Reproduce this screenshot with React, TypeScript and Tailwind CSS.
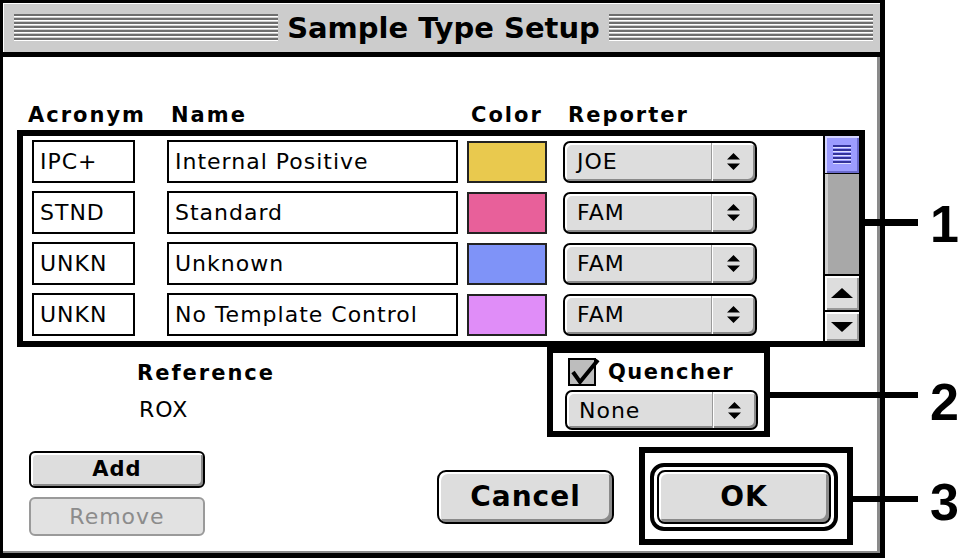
import React from "react";

function UpDown() {
  return (
    <svg width="13" height="17" viewBox="0 0 13 17">
      <path d="M0 6.5 L6.5 0 L13 6.5 Z M0 10.5 L13 10.5 L6.5 17 Z" fill="#000" />
    </svg>
  );
}

function Popup({ label, className }: { label: string; className: string }) {
  return (
    <div
      className={`flex items-stretch rounded-[7px] border-2 border-black bg-[#dddddd] shadow-[inset_2px_2px_0_#ffffff,inset_-2px_-2px_0_#8a8a8a] ${className}`}
    >
      <div className="flex flex-1 items-center pl-[12px] text-[22px] tracking-[1px]">{label}</div>
      <div className="flex w-[44px] items-center justify-center border-l border-[#9a9a9a] shadow-[inset_1px_0_0_#ffffff]">
        <UpDown />
      </div>
    </div>
  );
}

const rows = [
  { a: "IPC+", n: "Internal Positive", c: "bg-[#e9c94e]", r: "JOE" },
  { a: "STND", n: "Standard", c: "bg-[#e8609a]", r: "FAM" },
  { a: "UNKN", n: "Unknown", c: "bg-[#7f93f8]", r: "FAM" },
  { a: "UNKN", n: "No Template Control", c: "bg-[#e08df8]", r: "FAM" },
];

const stripes =
  "bg-[image:repeating-linear-gradient(to_bottom,#6e6e6e_0px,#6e6e6e_2px,#ffffff_2px,#ffffff_3px,#cccccc_3px,#cccccc_4px)]";

export default function App() {
  return (
    <div className="relative h-[560px] w-[960px] overflow-hidden bg-white font-['DejaVu_Sans',sans-serif] text-black">
      {/* Window */}
      <div className="flex h-[558px] w-[885px] flex-col border-b-[5px] border-l-[3px] border-r-[5px] border-t-[3px] border-black bg-white shadow-[inset_-3px_-2px_0_#8a8a8a]">
        {/* Title bar */}
        <div className="flex h-[54px] shrink-0 items-center gap-[9px] border-b-[5px] border-black bg-[#cccccc] pl-[11px] pr-[7px] shadow-[inset_1px_1px_0_#ffffff]">
          <div className={`h-[28px] flex-1 ${stripes}`} />
          <div className="text-[29px] font-bold leading-[34px]">Sample Type Setup</div>
          <div className={`h-[28px] flex-1 ${stripes}`} />
        </div>

        {/* Content */}
        <div className="flex flex-1 flex-col">
          {/* Header */}
          <div className="mt-[46px] flex pl-[25px] text-[21px] font-bold leading-[24px] tracking-[2px]">
            <div className="w-[143px]">Acronym</div>
            <div className="w-[300px]">Name</div>
            <div className="w-[97px]">Color</div>
            <div>Reporter</div>
          </div>

          {/* Table box */}
          <div className="ml-[14px] mt-[3px] flex h-[217px] w-[848px] border-[6px] border-black">
            <div className="flex flex-1 flex-col gap-[8px] pb-[5px] pl-[9px] pt-[4px]">
              {rows.map((row, i) => (
                <div key={i} className="flex h-[43px] items-center">
                  <div className="flex h-[43px] w-[103px] items-center border-2 border-black pl-[6px] text-[22px] tracking-[1px]">
                    {row.a}
                  </div>
                  <div className="ml-[32px] flex h-[43px] w-[291px] items-center border-2 border-black pl-[6px] text-[22px] tracking-[1px]">
                    {row.n}
                  </div>
                  <div className={`ml-[9px] h-[42px] w-[80px] border-2 border-[#222222] ${row.c}`} />
                  <Popup label={row.r} className="ml-[16px] h-[42px] w-[194px]" />
                </div>
              ))}
            </div>
            {/* Scrollbar */}
            <div className="flex w-[36px] flex-col border-l-2 border-black">
              <div className="flex h-[38px] items-center justify-center border-b border-black bg-[#9c9cff] shadow-[inset_2px_2px_0_#d4d4ff,inset_-2px_-2px_0_#6a6acc]">
                <div className="h-[20px] w-[18px] bg-[image:repeating-linear-gradient(to_bottom,#33339a_0px,#33339a_2px,#e0e0ff_2px,#e0e0ff_3px,#9c9cff_3px,#9c9cff_4px)]" />
              </div>
              <div className="flex-1 bg-[#a8a8a8] shadow-[inset_3px_0_0_#cfcfcf]" />
              <div className="flex h-[36px] items-center justify-center border-t-2 border-black bg-[#dddddd] shadow-[inset_2px_2px_0_#ffffff,inset_-2px_-2px_0_#999999]">
                <svg width="22" height="10" viewBox="0 0 22 10">
                  <path d="M0 10 L11 0 L22 10 Z" fill="#000" />
                </svg>
              </div>
              <div className="flex h-[31px] items-center justify-center border-t-2 border-black bg-[#dddddd] shadow-[inset_2px_2px_0_#ffffff,inset_-2px_-2px_0_#999999]">
                <svg width="22" height="10" viewBox="0 0 22 10">
                  <path d="M0 0 L22 0 L11 10 Z" fill="#000" />
                </svg>
              </div>
            </div>
          </div>

          {/* Middle row */}
          <div className="flex">
            <div className="w-[544px] pl-[134px] pt-[14px]">
              <div className="text-[21px] font-bold leading-[24px] tracking-[2px]">Reference</div>
              <div className="mt-[12px] pl-[2px] text-[22px] leading-[26px] tracking-[1px]">ROX</div>
            </div>
            <div className="flex h-[90px] w-[223px] flex-col border-[6px] border-black pl-[12px]">
              <div className="ml-[3px] mt-[5px] flex h-[28px] items-center">
                <svg width="32" height="28" viewBox="0 0 32 28">
                  <rect x="1" y="1" width="26" height="26" fill="#bdbdbd" stroke="#000" strokeWidth="2" />
                  <path d="M5 14 L12 24 L30 2" fill="none" stroke="#000" strokeWidth="4" />
                </svg>
                <span className="ml-[8px] text-[21px] font-bold leading-[24px] tracking-[1.5px]">Quencher</span>
              </div>
              <Popup label="None" className="mt-[4px] h-[40px] w-[193px]" />
            </div>
          </div>

          {/* Bottom row */}
          <div className="mt-[10px] flex items-start">
            <div className="ml-[26px] flex flex-col gap-[9px] pt-[4px]">
              <div className="flex h-[37px] w-[176px] items-center justify-center rounded-[6px] border-2 border-black bg-[#dddddd] text-[21px] font-bold tracking-[1px] shadow-[inset_2px_2px_0_#ffffff,inset_-2px_-2px_0_#8a8a8a]">
                Add
              </div>
              <div className="flex h-[39px] w-[176px] items-center justify-center rounded-[6px] border-2 border-[#9a9a9a] bg-[#e2e2e2] text-[22px] tracking-[1px] text-[#8c8c8c]">
                Remove
              </div>
            </div>
            <div className="ml-[232px] mt-[23px] flex h-[54px] w-[177px] items-center justify-center rounded-[9px] border-2 border-black bg-[#dddddd] text-[28px] font-bold tracking-[1px] shadow-[inset_2px_2px_0_#ffffff,inset_-3px_-3px_0_#8a8a8a]">
              Cancel
            </div>
            <div className="ml-[25px] h-[98px] w-[214px] border-[6px] border-black pl-[5px] pt-[10px]">
              <div className="h-[68px] w-[188px] rounded-[14px] border-[4px] border-black p-[3px]">
                <div className="flex h-full w-full items-center justify-center rounded-[8px] border-2 border-black bg-[#dddddd] text-[28px] font-bold tracking-[1px] shadow-[inset_2px_2px_0_#ffffff,inset_-3px_-3px_0_#8a8a8a]">
                  OK
                </div>
              </div>
            </div>
          </div>
        </div>
      </div>

      {/* Callouts */}
      <div className="absolute left-[865px] top-[219px] h-[7px] w-[53px] bg-black" />
      <div className="absolute left-[770px] top-[392px] h-[6px] w-[148px] bg-black" />
      <div className="absolute left-[853px] top-[496px] h-[6px] w-[65px] bg-black" />
      <div className="absolute left-[930px] top-[198px] font-['Liberation_Sans',Arial,sans-serif] text-[52px] font-bold leading-[52px]">
        1
      </div>
      <div className="absolute left-[930px] top-[376px] font-['Liberation_Sans',Arial,sans-serif] text-[52px] font-bold leading-[52px]">
        2
      </div>
      <div className="absolute left-[930px] top-[476px] font-['Liberation_Sans',Arial,sans-serif] text-[52px] font-bold leading-[52px]">
        3
      </div>
    </div>
  );
}
